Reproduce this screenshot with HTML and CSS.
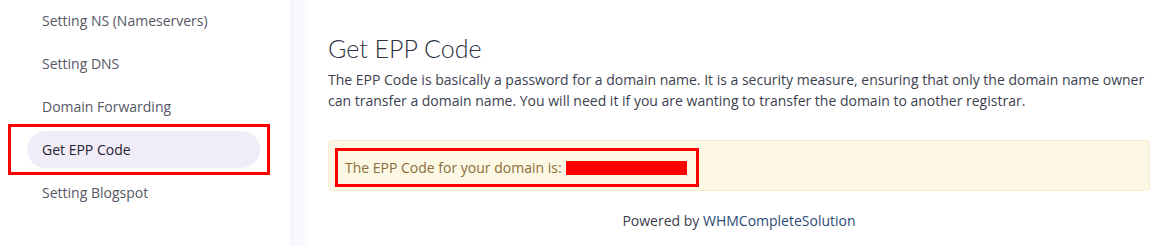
FILE: index.html
```html
<!DOCTYPE html>
<html lang="en">
<head>
<meta charset="utf-8">
<title>Get EPP Code</title>
<link rel="stylesheet" href="styles.css">
</head>
<body>
<div class="page">
  <aside class="sidebar">
    <nav class="nav">
      <a class="nav-item">Setting NS (Nameservers)</a>
      <a class="nav-item">Setting DNS</a>
      <a class="nav-item">Domain Forwarding</a>
      <a class="nav-item active">Get EPP Code</a>
      <a class="nav-item">Setting Blogspot</a>
    </nav>
    <div class="sidebar-edge"></div>
  </aside>
  <main class="main">
    <h1 class="title">Get EPP Code</h1>
    <p class="desc">The EPP Code is basically a password for a domain name. It is a security measure, ensuring that only the domain name owner can transfer a domain name. You will need it if you are wanting to transfer the domain to another registrar.</p>
    <div class="alert">
      <span class="mark">The EPP Code for your domain is: <span class="redacted"></span></span>
    </div>
    <footer class="footer">Powered by <span class="brand">WHMCompleteSolution</span></footer>
  </main>
</div>
</body>
</html>
```

FILE: styles.css
```css
* { box-sizing: border-box; }
html, body { margin: 0; padding: 0; background: #fff; }
body { font-family: "Open Sans", "Noto Sans", sans-serif; font-size: 14px; }
.page { display: flex; width: 1167px; height: 246px; overflow: hidden; }
.sidebar { width: 308px; flex: none; display: flex; }
.nav { width: 290px; display: flex; flex-direction: column; gap: 6px; padding: 2px 0 0 27px; }
.sidebar-edge { width: 18px; background: linear-gradient(to right, #f7f5fc, #fcfbfe); }
.nav-item {
  position: relative;
  display: flex; align-items: center;
  height: 37px; width: 233px;
  padding-left: 15px;
  border-radius: 19px;
  color: #555866;
  font-size: 14px;
}
.nav-item.active { background: #f1edf8; color: #1f2230; }
.nav-item.active::after {
  content: "";
  position: absolute;
  left: -19px; right: -10px; top: -7px; bottom: -7px;
  border: 3px solid #f00;
}
.main { flex: 1; padding: 0 17px 0 20px; display: flex; flex-direction: column; }
.title {
  margin: 33px 0 0;
  font-family: "Lato", sans-serif;
  font-weight: 300;
  font-size: 25px;
  line-height: 30px;
  color: #2e3140;
}
.desc {
  margin: 6px 0 0;
  line-height: 21px;
  color: #3c3f50;
}
.alert {
  margin-top: 29px;
  background: #fcf8e3;
  border: 1px solid #faebcc;
  border-radius: 4px;
  padding: 7px 6px 3px;
  color: #8a6d3b;
}
.mark {
  display: inline-flex; align-items: center;
  border: 3px solid #f00;
  padding: 6px 9px 6px 7px;
  line-height: 21px;
}
.redacted { display: inline-block; width: 121px; height: 14px; background: #f00; margin-left: 4px; }
.footer {
  margin-top: 20px;
  text-align: center;
  color: #3b3b4a;
  line-height: 20px;
}
.brand { color: #2c4a78; }
```
